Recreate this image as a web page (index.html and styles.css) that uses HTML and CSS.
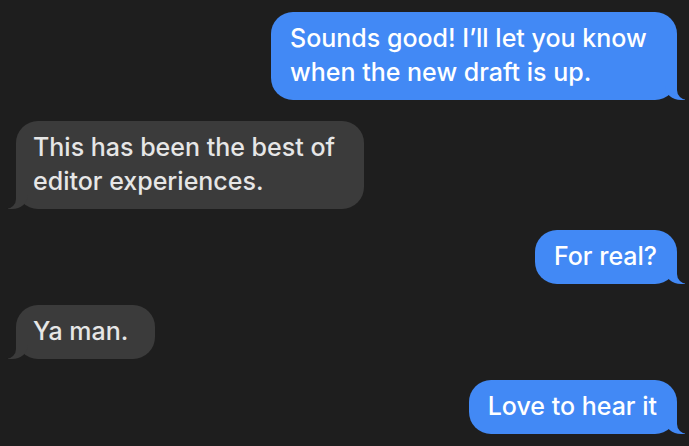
FILE: index.html
```html
<!DOCTYPE html>
<html lang="en">
<head>
    <meta charset="UTF-8">
    <meta name="viewport" content="width=device-width, initial-scale=1.0">
    <title>Messages</title>
    <link rel="stylesheet" href="styles.css">
</head>
<body>
    <div class="chat">
        <p class="bubble sent first">Sounds good! I’ll let you know when the new draft is up.</p>
        <p class="bubble received second">This has been the best of editor experiences.</p>
        <p class="bubble sent">For real?</p>
        <p class="bubble received">Ya man.</p>
        <p class="bubble sent">Love to hear it</p>
    </div>
</body>
</html>
```
FILE: styles.css
```css
body {
    margin: 0;
    background-color: #1e1e1e;
    font-family: Inter, "Noto Sans", sans-serif;
    height: 446px;
    overflow: hidden;
}
.chat {
    display: flex;
    flex-direction: column;
    gap: 21px;
    padding: 12px 12px 0 16px;
}
.bubble {
    position: relative;
    box-sizing: border-box;
    margin: 0;
    padding: 9px 20px 11px 19px;
    font-size: 25px;
    font-weight: 500;
    line-height: 34px;
    border-radius: 22px;
    color: #fff;
}
.sent {
    align-self: flex-end;
    background-color: #4289f5;
}
.received {
    align-self: flex-start;
    padding-left: 17px;
    padding-right: 27px;
    background-color: #3b3b3b;
    color: #e6e6e6;
}
.first {
    max-width: 406px;
}
.second {
    max-width: 348px;
}

/* tails */
.bubble::before,
.bubble::after {
    content: "";
    position: absolute;
    bottom: 0;
    height: 22px;
}
.sent::before {
    right: -8px;
    width: 20px;
    background-color: #4289f5;
    border-bottom-left-radius: 16px 14px;
}
.sent::after {
    right: -26px;
    width: 26px;
    background-color: #1e1e1e;
    border-bottom-left-radius: 10px;
}
.received::before {
    left: -8px;
    width: 20px;
    background-color: #3b3b3b;
    border-bottom-right-radius: 16px 14px;
}
.received::after {
    left: -26px;
    width: 26px;
    background-color: #1e1e1e;
    border-bottom-right-radius: 10px;
}
```
